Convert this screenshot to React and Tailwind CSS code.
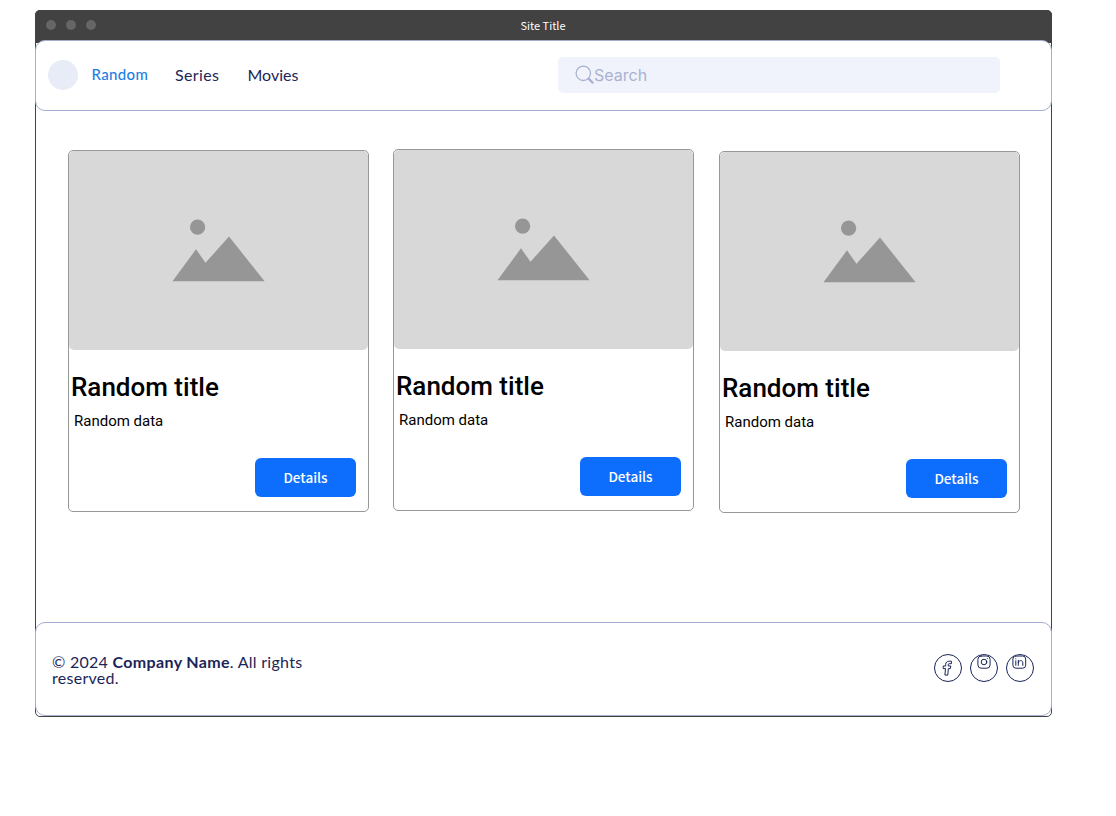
const NAV = "font-['Lato','Liberation_Sans',sans-serif]";

function Card({ className }) {
  return (
    <article className={`flex h-[362px] w-[301px] shrink-0 flex-col rounded-[5px] border border-[#979797] bg-white font-['Roboto',sans-serif] text-black ${className}`}>
      <div className="h-[199px] shrink-0 rounded-[5px] bg-[#d8d8d8]">
        <svg className="block h-full w-full" viewBox="0 0 299 199" fill="#969696">
          <circle cx="128.6" cy="76.2" r="7.6" />
          <path d="M103.5 130.3 127 98.3 136.5 111.8 160 85.5 195.6 130.3Z" />
        </svg>
      </div>
      <h2 className="mt-[21px] ml-[2px] text-[26px] leading-[32px] font-medium whitespace-nowrap">Random title</h2>
      <p className="mt-[8px] ml-[5px] text-[15px] leading-[20px]">Random data</p>
      <button className="mt-[27px] mr-[12px] h-[39px] w-[101px] self-end rounded-[6px] bg-[#0d6efd] pb-[2px] font-['Noto_Sans_CJK_SC',sans-serif] text-[13.5px] leading-[20px] font-medium text-white">
        Details
      </button>
    </article>
  );
}

function Social({ children, label }) {
  return (
    <a aria-label={label} className="h-7 w-7 overflow-hidden rounded-full border border-[#1b2559]">
      <svg className="block h-[26px] w-[26px]" viewBox="0 0 26 26" fill="none" stroke="#1b2559" strokeWidth="1" strokeLinejoin="round" strokeLinecap="round">
        {children}
      </svg>
    </a>
  );
}

export default function App() {
  return (
    <div className="h-[816px] w-[1116px] overflow-hidden bg-white pt-[10px] pl-[35px]">
      <div className="flex h-[707px] w-[1017px] flex-col rounded-[5px] border border-[#424242] bg-white">
        <div className="-mx-px -mt-px flex h-[33px] shrink-0 items-center rounded-t-[5px] bg-[#424242] pl-[11px]">
          <div className="flex w-[50px] gap-[10px] pb-[3px] pl-[0.4px]">
            <i className="h-[10px] w-[10px] rounded-full bg-[#666]" />
            <i className="h-[10px] w-[10px] rounded-full bg-[#666]" />
            <i className="h-[10px] w-[10px] rounded-full bg-[#666]" />
          </div>
          <div className="mr-[62px] flex-1 pb-[4px] text-center font-['Noto_Sans_CJK_SC',sans-serif] text-[11px] leading-[16px] text-white">Site Title</div>
        </div>

        <header className="relative -mx-px -mt-[3px] flex h-[71px] shrink-0 items-center rounded-[10px] border border-[#a3adcf] bg-white pl-[12px]">
          <div className="mb-px h-[30px] w-[30px] rounded-full bg-[#e7ecf7]" />
          <nav className={`mb-[2px] flex w-[480px] pl-[13.5px] text-[16px] leading-[20px] text-[#1b2559] ${NAV}`}>
            <span className="w-[83.5px] text-[15px] font-medium tracking-[0.35px] text-[#1e7fe4]">Random</span>
            <span className="w-[72.5px] pt-px tracking-[0.35px]">Series</span>
            <span className="pt-px">Movies</span>
          </nav>
          <div className="mb-[2px] flex h-[36px] w-[442px] items-center rounded-[5px] bg-[#f0f3fb] pl-[17px] font-['Inter',sans-serif] text-[16px] leading-[20px] text-[#a9b2d0]">
            <svg className="h-[19px] w-[19px]" viewBox="0 0 19 19" fill="none" stroke="#a9b2d0" strokeLinecap="round">
              <circle cx="8.3" cy="8.3" r="7.2" strokeWidth="1.3" />
              <path d="m13.6 13.6 4 4" strokeWidth="2.2" />
            </svg>
            <span>Search</span>
          </div>
        </header>

        <main className="flex h-[511px] shrink-0 items-start pl-[32px]">
          <Card className="mt-[39px]" />
          <Card className="mt-[38px] ml-[24px]" />
          <Card className="mt-[40px] ml-[25px]" />
        </main>

        <footer className={`-mx-px flex h-[94px] shrink-0 justify-between rounded-[10px] border border-[#a3adcf] bg-white pt-[31px] pr-[17px] pl-[16px] text-[#1b2559] ${NAV}`}>
          <p className="w-[270px] text-[16px] leading-[16px] tracking-[0.27px]">
            © 2024 <strong className="font-bold tracking-[0.35px]">Company Name</strong>. All rights reserved.
          </p>
          <div className="flex gap-2">
            <Social label="Facebook">
              <path d="M16 6.2h-1.8c-2.2 0-3.5 1.2-3.5 3.1V11H8.2v2.6h2.3l-.6 6.5h2.9l.5-6.5h2l.5-2.6h-2.5V9.6c0-.6.3-.9.9-.9H16Z" />
            </Social>
            <Social label="Instagram">
              <rect x="6.9" y="1" width="12.2" height="12.2" rx="3.3" />
              <circle cx="13" cy="7" r="2.8" />
              <path d="M16.3 3.6v.1" />
            </Social>
            <Social label="LinkedIn">
              <rect x="5.9" y="1" width="12.8" height="12.2" rx="3" />
              <path d="M8.8 5.8v4.6M8.8 3.7v.1M11.3 5.3v5.1M11.3 7.8c0-3 4.5-3 4.5 0v2.6" />
            </Social>
          </div>
        </footer>
      </div>
    </div>
  );
}
